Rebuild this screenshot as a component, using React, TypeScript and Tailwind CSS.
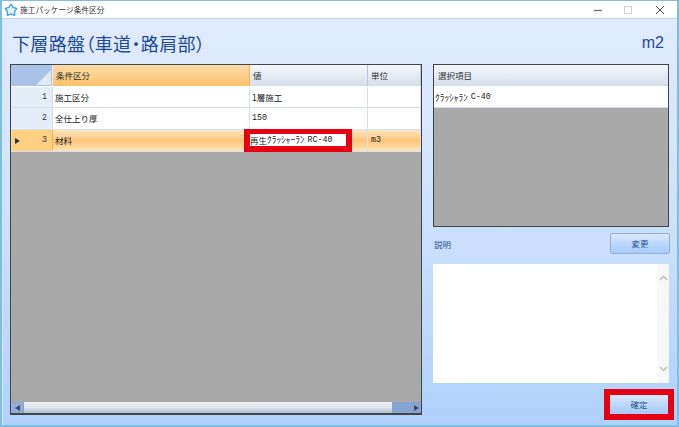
const jp = "font-['Noto_Sans_CJK_JP','Liberation_Sans',sans-serif]";
const mono = "font-['Liberation_Mono',monospace] text-[8.3px]";

const Cell = ({ w, children, className = "" }: { w: string; children?: React.ReactNode; className?: string }) => (
  <div className={`${w} flex items-center border-r border-[#d5dfef] pl-[2px] text-[8.5px] text-[#222] whitespace-nowrap ${className}`}>{children}</div>
);

const RowHead = ({ n, active }: { n: number; active?: boolean }) => (
  <div className={`w-[42px] flex items-center justify-end pr-[5px] border-r text-[#333] relative ${mono} ${active ? "bg-[#fdd083] border-[#f5b154]" : "bg-[#e5edf7] border-[#d0dcec]"}`}>
    {active && (
      <svg className="absolute left-[4px] top-[8px]" width="5" height="6" viewBox="0 0 5 6"><path d="M0 0L5 3L0 6Z" fill="#333" /></svg>
    )}
    {n}
  </div>
);

const HeaderCell = ({ w, children, active }: { w: string; children: React.ReactNode; active?: boolean }) => (
  <div className={`${w} flex items-center pl-[3px] text-[8.5px] text-[#333] border-r ${active ? "border-[#f5b154] bg-gradient-to-b from-[#fbdba6] via-[#fcd08a] to-[#fbc068]" : "border-[#b6c4d8] bg-gradient-to-b from-[#f5f7fb] to-[#d6deea]"}`}>
    {children}
  </div>
);

const Row = ({ n, a, b, c, h, active }: { n: number; a: string; b: React.ReactNode; c?: React.ReactNode; h: string; active?: boolean }) => (
  <div className={`flex ${h} border-b border-[#d5dfef] ${active ? "bg-gradient-to-b from-[#fde6c0] via-[#fdc67a] to-[#fde2b4]" : "bg-white"}`}>
    <RowHead n={n} active={active} />
    <Cell w="w-[197px]">{a}</Cell>
    <Cell w="w-[118px]">{b}</Cell>
    <Cell w="flex-1" className="pl-[3px]">{c}</Cell>
  </div>
);

const Btn = ({ children, className = "" }: { children: React.ReactNode; className?: string }) => (
  <div className={`flex items-center justify-center text-[8.5px] text-[#1f4e8c] bg-gradient-to-b from-[#dbe9fc] via-[#bcd8fd] to-[#a7cbfa] ${className}`}>{children}</div>
);

const Kana = ({ children }: { children: React.ReactNode }) => <span className="text-[9.4px]">{children}</span>;
const Latin = ({ children }: { children: React.ReactNode }) => <span className={mono}>{children}</span>;

export default function App() {
  return (
    <div className={`w-[679px] h-[427px] flex flex-col overflow-hidden border border-b-2 border-[#7fbde3] border-x-2 ${jp}`}>
      <div className="h-[18px] shrink-0 bg-white border-b border-[#bcd3ea] flex items-center pl-[2px]">
        <svg width="14" height="14" viewBox="0 0 14 14" className="shrink-0">
          <path d="M7 1.2L9.2 4.4L12.8 5.5L10.6 8.5L10.7 12.3L7 11L3.3 12.3L3.4 8.5L1.2 5.5L4.8 4.4Z" fill="#e4f2fb" stroke="#4da3dc" strokeWidth="1.4" strokeLinejoin="round" />
        </svg>
        <span className="ml-[2px] text-[7.7px] text-[#333]">施工パッケージ条件区分</span>
        <div className="ml-auto flex items-center">
          <svg width="10" height="10" viewBox="0 0 10 10"><path d="M1 5.5H9" stroke="#777" strokeWidth="1.4" /></svg>
          <svg width="10" height="10" viewBox="0 0 10 10" className="ml-[20px]"><rect x="1.5" y="1.5" width="7" height="7" fill="none" stroke="#d0d0d0" /></svg>
          <svg width="10" height="10" viewBox="0 0 10 10" className="ml-[22px] mr-[12px]"><path d="M1 1L9 9M9 1L1 9" stroke="#444" strokeWidth="1" /></svg>
        </div>
      </div>

      <div className="flex-1 flex flex-col bg-gradient-to-b from-[#e0ebfd] via-[#cde1fd] to-[#aed1fc] border-l border-[#d8e6f8] relative">
        <div className="h-[45px] shrink-0 flex items-center justify-between pl-[9px] pr-[13px] pt-[2px]">
          <span className="text-[18px] leading-none text-[#1c4b8f] [font-feature-settings:'palt'] tracking-[0.35px]">下層路盤（車道・路肩部）</span>
          <span className="text-[16px] leading-none text-[#1c4b8f] font-['Liberation_Sans',sans-serif]">m2</span>
        </div>

        <div className="flex-1 flex items-start pl-[7px] pr-[8px] gap-[11px] min-h-0">
          <div className="w-[412px] h-[351px] flex flex-col border border-[#444] border-b-2 bg-[#a9a9a9]">
            <div className="flex h-[22px] border-b border-[#fff]">
              <div className="w-[42px] bg-[#a9c3e8] border-r border-[#e6eef8] relative overflow-hidden">
                <svg className="absolute inset-0" width="42" height="21" viewBox="0 0 42 21"><path d="M25 20L40 5V20Z" fill="#dfe9f6" /></svg>
              </div>
              <HeaderCell w="w-[197px]" active>条件区分</HeaderCell>
              <HeaderCell w="w-[118px]">値</HeaderCell>
              <HeaderCell w="flex-1">単位</HeaderCell>
            </div>
            <Row n={1} a="施工区分" b="1層施工" h="h-[21px]" />
            <Row n={2} a="全仕上り厚" b={<Latin>150</Latin>} h="h-[22px]" />
            <Row n={3} a="材料" b="" c={<Latin>m3</Latin>} h="h-[22px]" active />
            <div className="flex-1" />
            <div className="h-[11px] flex bg-[#a9a9a9]">
              <div className="w-[12px] bg-[#90acd8] flex items-center justify-center">
                <svg width="5" height="6" viewBox="0 0 5 6"><path d="M5 0L0 3L5 6Z" fill="#3d4a60" /></svg>
              </div>
              <div className="w-[370px] bg-gradient-to-b from-[#eef1f5] via-[#dfe4ea] to-[#b3c0d5] border-x border-[#8ba2c4]" />
              <div className="flex-1 bg-[#84a2d2] flex items-center justify-end pr-[2px]">
                <svg width="5" height="6" viewBox="0 0 5 6"><path d="M0 0L5 3L0 6Z" fill="#3d4a60" /></svg>
              </div>
            </div>
          </div>

          <div className="flex-1 flex flex-col">
            <div className="h-[163px] shrink-0 flex flex-col border border-[#444] bg-[#a9a9a9]">
              <div className="h-[22px] flex items-center pl-[4px] text-[8.5px] text-[#333] bg-gradient-to-b from-[#f5f7fb] to-[#d6deea] border-b border-white">選択項目</div>
              <div className="h-[21px] flex items-center pl-[1px] gap-[3px] text-[#222] bg-white border-b border-[#d5dfef] whitespace-nowrap">
                <Kana>ｸﾗｯｼｬﾗﾝ</Kana><Latin>C-40</Latin>
              </div>
            </div>
            <div className="h-[37px] shrink-0 flex items-start justify-between pt-[6px]">
              <span className="pl-[1px] pt-[1px] text-[8.5px] text-[#1f4e8c] leading-[21px]">説明</span>
              <Btn className="w-[60px] h-[21px] border border-[#8fb0d9] rounded-[2px] -mr-[1px]">変更</Btn>
            </div>
            <div className="h-[119px] shrink-0 flex bg-white">
              <div className="flex-1" />
              <div className="w-[12px] bg-[#f6f8f8] flex flex-col items-center justify-between py-[11px]">
                <svg width="9" height="6" viewBox="0 0 9 6"><path d="M1 5L4.5 1.5L8 5" fill="none" stroke="#c2c2c2" strokeWidth="1.6" /></svg>
                <svg width="9" height="6" viewBox="0 0 9 6"><path d="M1 1L4.5 4.5L8 1" fill="none" stroke="#c2c2c2" strokeWidth="1.6" /></svg>
              </div>
            </div>
            <div className="flex justify-end pt-[6px] -mr-[5px]">
              <div className="w-[70px] h-[31px] border-[6px] border-[#e60012] flex">
                <Btn className="flex-1">確定</Btn>
              </div>
            </div>
          </div>
        </div>

        <div className="absolute left-[241px] top-[110px] w-[108px] h-[23px] border-[6px] border-t-[5px] border-[#e60012] bg-white flex items-center text-[8.5px] leading-none text-[#222] whitespace-nowrap">
          <span>再生</span><Kana>ｸﾗｯｼｬｰﾗﾝ</Kana><span className={`${mono} ml-[3px]`}>RC-40</span>
        </div>
      </div>
    </div>
  );
}
